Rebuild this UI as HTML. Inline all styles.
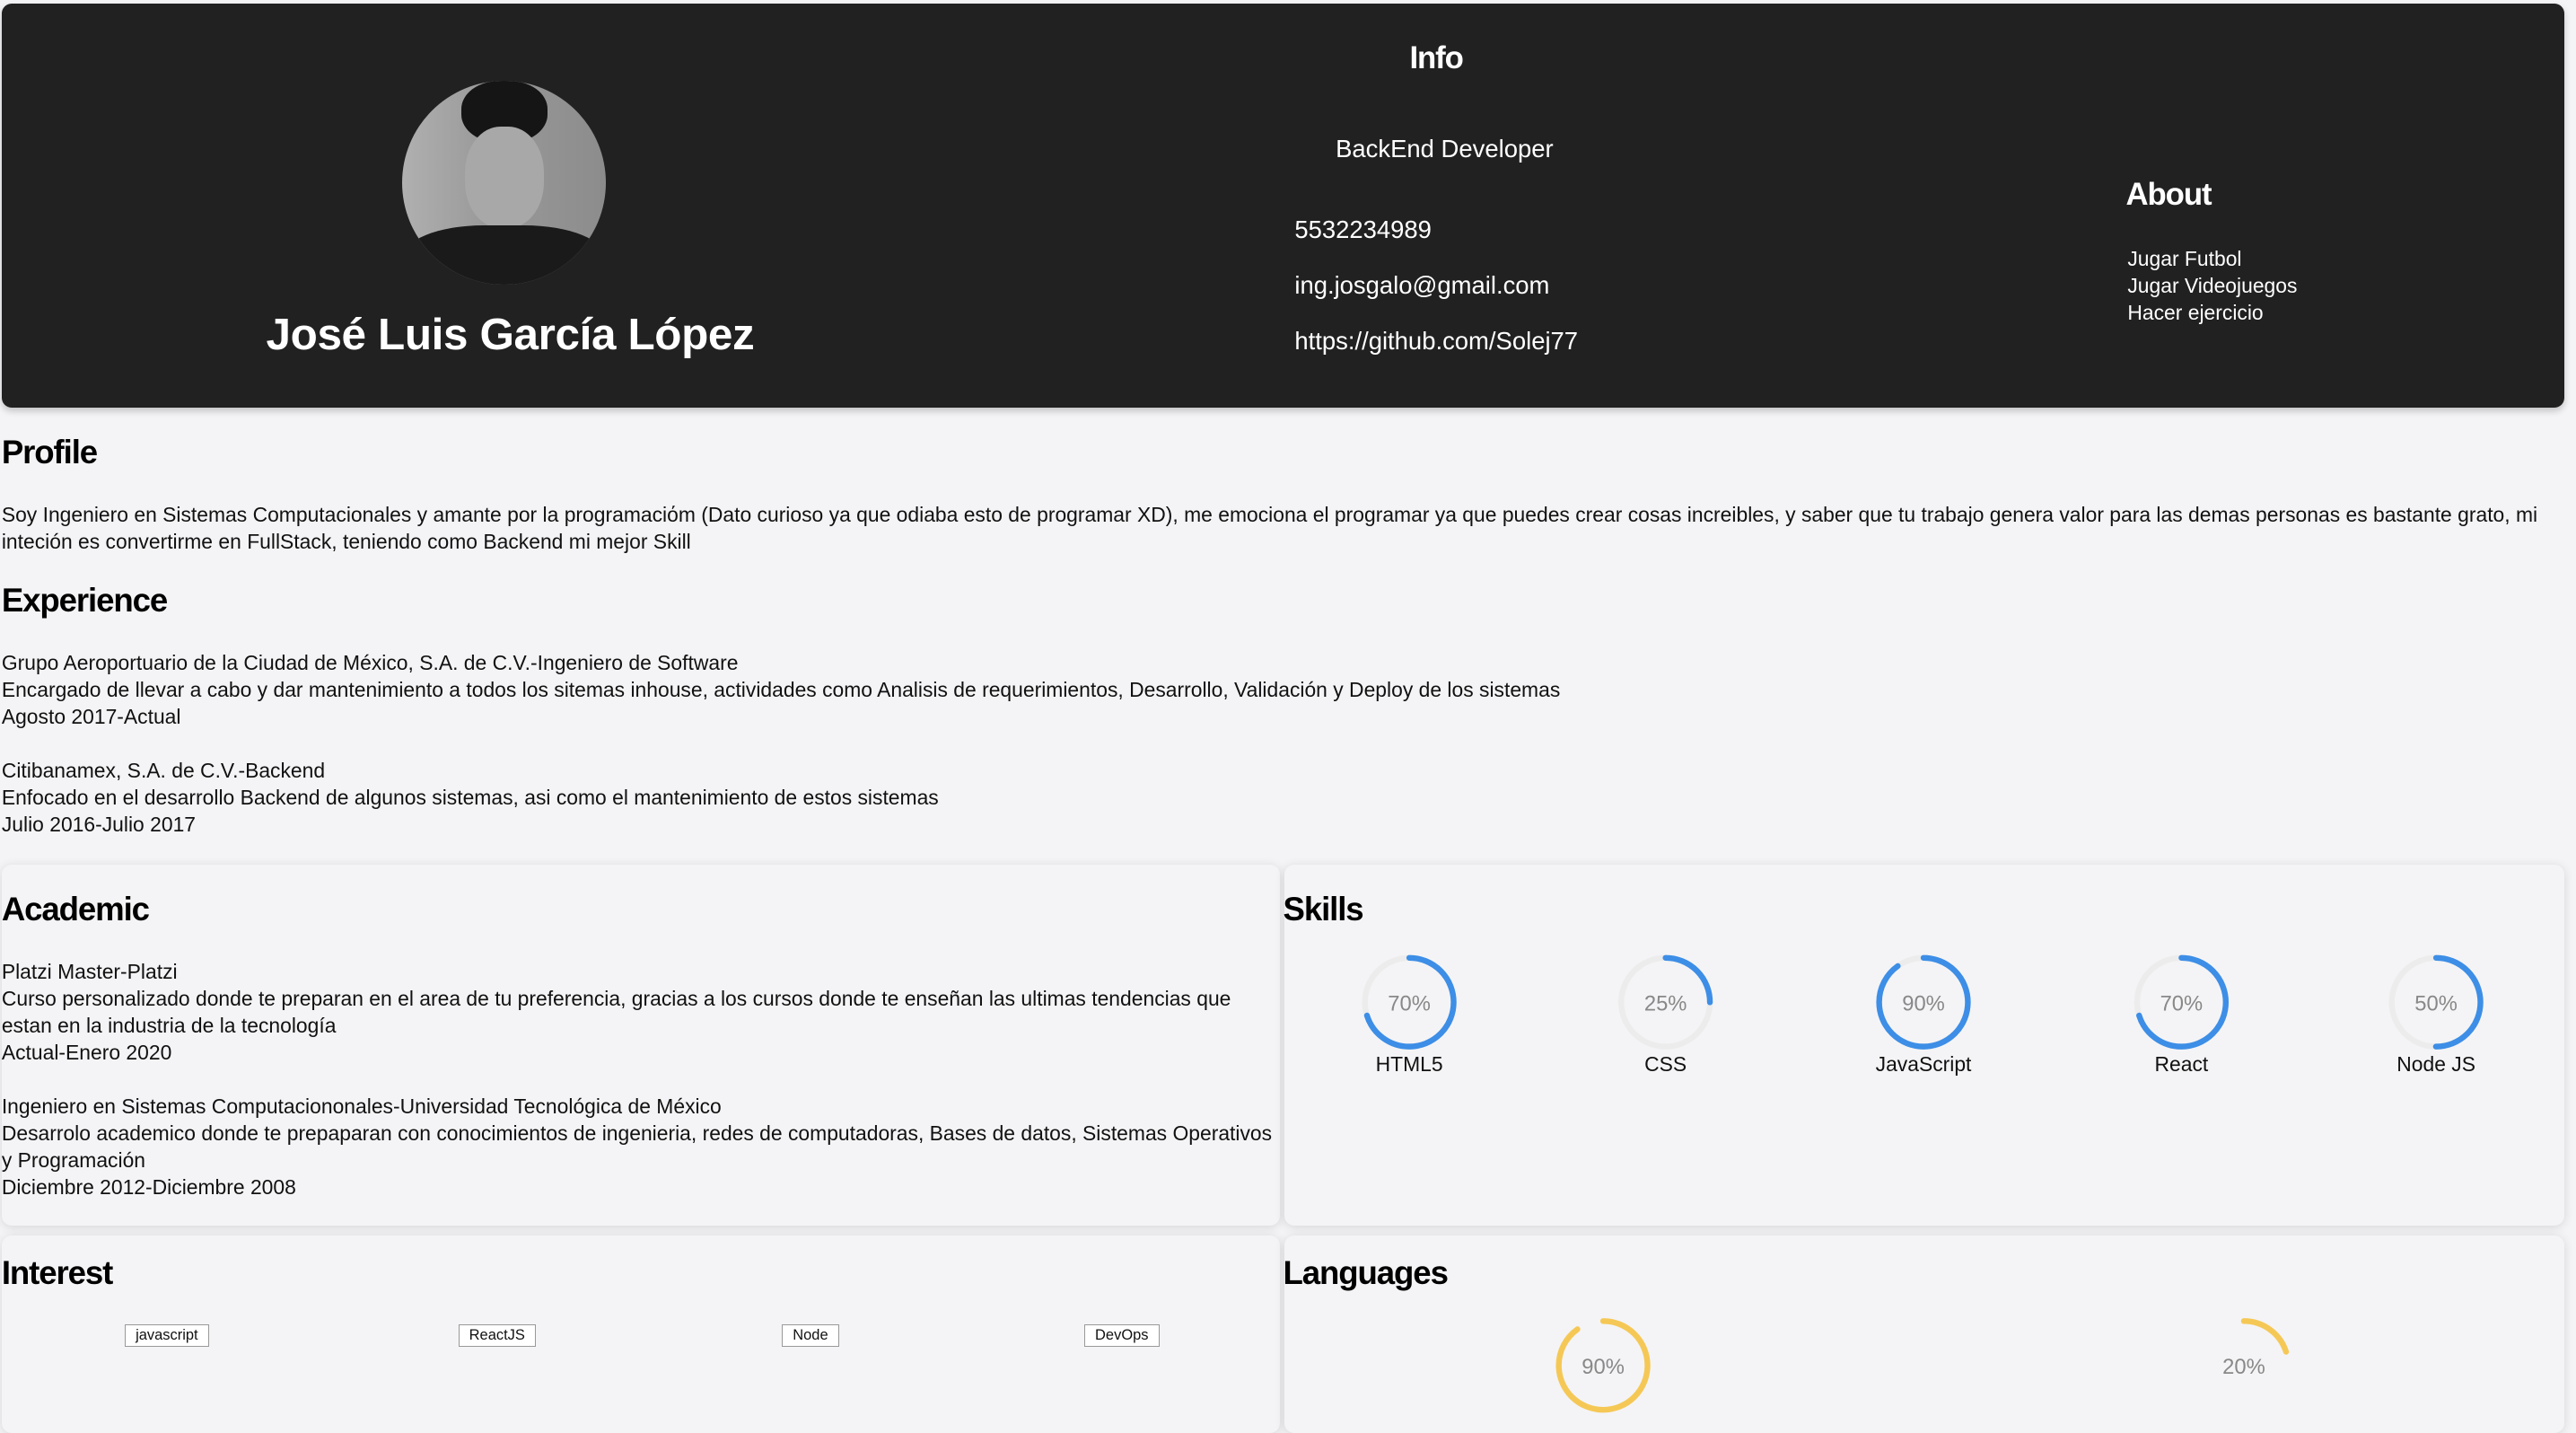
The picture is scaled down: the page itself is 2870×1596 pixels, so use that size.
<!DOCTYPE html>
<html><head><meta charset="utf-8"><style>
html,body{margin:0;padding:0;background:#f4f4f6;}
body{width:1568px;height:857px;zoom:1.8304;position:relative;overflow:hidden;font-family:"Liberation Sans",sans-serif;color:#111;font-size:12.5px;}
.a{position:absolute;}
.h{font-weight:900;font-size:20px;letter-spacing:-0.6px;color:#000;}
.hdr{left:1px;top:2px;width:1560px;height:246px;background:#212121;border-radius:6px;box-shadow:0 2px 4px rgba(0,0,0,.2);}
.w{color:#fff;}
.card{background:#f4f4f6;border-radius:6px;box-shadow:0 1px 6px rgba(0,0,0,.12);}
.t{line-height:16.4px;}
.nw{white-space:nowrap;}
.tag{font-size:9px;border:1px solid #999;background:#fff;padding:1px 6px;}
</style></head><body>
<div class="a hdr"></div>
<div class="a" style="left:245px;top:49px;width:124px;height:124px;border-radius:50%;background:linear-gradient(90deg,#b0b0b0,#9a9a9a 40%,#8c8c8c);overflow:hidden">
<div class="a" style="left:36px;top:0;width:52px;height:38px;background:#151515;border-radius:45%"></div>
<div class="a" style="left:38px;top:28px;width:48px;height:62px;background:#a8a8a8;border-radius:45%"></div>
<div class="a" style="left:0px;top:88px;width:124px;height:50px;background:#1a1a1a;border-radius:40% 40% 0 0"></div>
</div>
<div class="a w h" style="left:162px;top:188px;font-size:27px;letter-spacing:-0.2px;">José Luis García López</div>
<div class="a w h" style="left:858px;top:25px;font-size:19px;">Info</div>
<div class="a w" style="left:813px;top:82px;font-size:15px;">BackEnd Developer</div>
<div class="a w" style="left:788px;top:131px;font-size:15px;">5532234989</div>
<div class="a w" style="left:788px;top:165px;font-size:15px;">ing.josgalo@gmail.com</div>
<div class="a w" style="left:788px;top:199px;font-size:15px;">https://github.com/Solej77</div>
<div class="a w h" style="left:1294px;top:108px;font-size:19px;">About</div>
<div class="a w t" style="left:1295px;top:149px;">Jugar Futbol<br>Jugar Videojuegos<br>Hacer ejercicio</div>

<div class="a h" style="left:1px;top:264px;">Profile</div>
<div class="a t" style="left:1px;top:305px;width:1560px;">Soy Ingeniero en Sistemas Computacionales y amante por la programaciόm (Dato curioso ya que odiaba esto de programar XD), me emociona el programar ya que puedes crear cosas increibles, y saber que tu trabajo genera valor para las demas personas es bastante grato, mi inteción es convertirme en FullStack, teniendo como Backend mi mejor Skill</div>
<div class="a h" style="left:1px;top:354px;">Experience</div>
<div class="a t" style="left:1px;top:395px;">Grupo Aeroportuario de la Ciudad de México, S.A. de C.V.-Ingeniero de Software<br>Encargado de llevar a cabo y dar mantenimiento a todos los sitemas inhouse, actividades como Analisis de requerimientos, Desarrollo, Validación y Deploy de los sistemas<br>Agosto 2017-Actual<br><br>Citibanamex, S.A. de C.V.-Backend<br>Enfocado en el desarrollo Backend de algunos sistemas, asi como el mantenimiento de estos sistemas<br>Julio 2016-Julio 2017</div>

<div class="a card" style="left:1px;top:526px;width:778px;height:220px;"></div>
<div class="a card" style="left:782px;top:526px;width:779px;height:220px;"></div>
<div class="a card" style="left:1px;top:752px;width:778px;height:120px;"></div>
<div class="a card" style="left:782px;top:752px;width:779px;height:120px;"></div>

<div class="a h" style="left:1px;top:542px;">Academic</div>
<div class="a t nw" style="left:1px;top:583px;">Platzi Master-Platzi<br>Curso personalizado donde te preparan en el area de tu preferencia, gracias a los cursos donde te enseñan las ultimas tendencias que<br>estan en la industria de la tecnología<br>Actual-Enero 2020<br><br>Ingeniero en Sistemas Computaciononales-Universidad Tecnológica de México<br>Desarrolo academico donde te prepaparan con conocimientos de ingenieria, redes de computadoras, Bases de datos, Sistemas Operativos<br>y Programación<br>Diciembre 2012-Diciembre 2008</div>
<div class="a h" style="left:781px;top:542px;">Skills</div>

<svg class="a" style="left:782px;top:570px" width="779" height="300">
<g fill="none" stroke-width="3.5" stroke-linecap="round">
<g transform="translate(76,40)"><circle r="27" stroke="#ececec"/><circle r="27" stroke="#3d8ee6" stroke-dasharray="118.8 200" transform="rotate(-90)"/></g>
<g transform="translate(232,40)"><circle r="27" stroke="#ececec"/><circle r="27" stroke="#3d8ee6" stroke-dasharray="42.4 200" transform="rotate(-90)"/></g>
<g transform="translate(389,40)"><circle r="27" stroke="#ececec"/><circle r="27" stroke="#3d8ee6" stroke-dasharray="152.7 200" transform="rotate(-90)"/></g>
<g transform="translate(546,40)"><circle r="27" stroke="#ececec"/><circle r="27" stroke="#3d8ee6" stroke-dasharray="118.8 200" transform="rotate(-90)"/></g>
<g transform="translate(701,40)"><circle r="27" stroke="#ececec"/><circle r="27" stroke="#3d8ee6" stroke-dasharray="84.8 200" transform="rotate(-90)"/></g>
<g transform="translate(194,261)"><circle r="27" stroke="#f5c856" stroke-dasharray="152.7 200" transform="rotate(-90)"/></g>
<g transform="translate(584,261)"><circle r="27" stroke="#f5c856" stroke-dasharray="33.9 200" transform="rotate(-90)"/></g>
</g>
<g font-family="Liberation Sans" font-size="13" fill="#888" text-anchor="middle">
<text x="76" y="45">70%</text><text x="232" y="45">25%</text><text x="389" y="45">90%</text><text x="546" y="45">70%</text><text x="701" y="45">50%</text>
<text x="194" y="266">90%</text><text x="584" y="266">20%</text>
</g>
<g font-family="Liberation Sans" font-size="12.5" fill="#111" text-anchor="middle">
<text x="76" y="82">HTML5</text><text x="232" y="82">CSS</text><text x="389" y="82">JavaScript</text><text x="546" y="82">React</text><text x="701" y="82">Node JS</text>
</g>
</svg>

<div class="a h" style="left:1px;top:763px;">Interest</div>
<div class="a h" style="left:781px;top:763px;">Languages</div>
<div class="a tag" style="left:76px;top:806px;">javascript</div>
<div class="a tag" style="left:279px;top:806px;">ReactJS</div>
<div class="a tag" style="left:476px;top:806px;">Node</div>
<div class="a tag" style="left:660px;top:806px;">DevOps</div>
</body></html>
